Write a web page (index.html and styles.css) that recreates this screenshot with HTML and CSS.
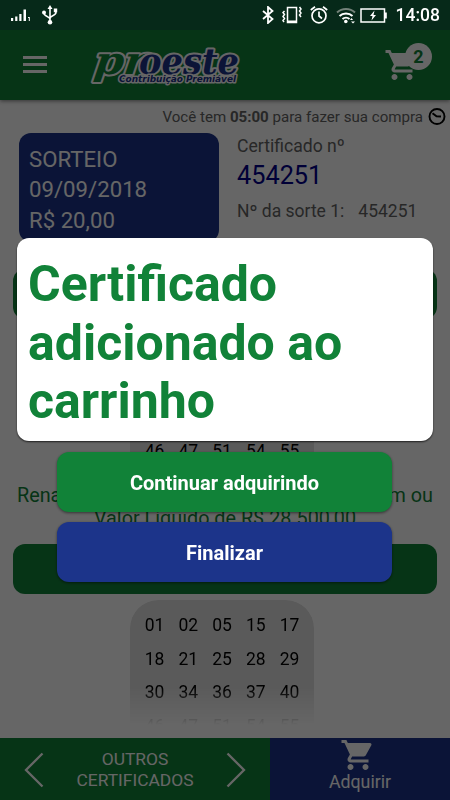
FILE: index.html
```html
<!DOCTYPE html>
<html lang="pt-BR">
<head>
    <meta charset="UTF-8">
    <meta name="viewport" content="width=device-width, initial-scale=1.0">
    <title>Proeste</title>
    <link rel="stylesheet" href="styles.css">
</head>
<body>
    <div class="app">
        <header class="header">
            <div class="menu"><span></span><span></span><span></span></div>
            <svg class="logo" width="156" height="46" viewBox="0 0 156 46">
                <text class="logo-pr" transform="translate(5 32) skewX(-7)" textLength="52" lengthAdjust="spacingAndGlyphs">pr</text>
                <text class="logo-oeste" x="51" y="32" textLength="100" lengthAdjust="spacingAndGlyphs">oeste</text>
                <text class="logo-sub" x="31" y="39.500" textLength="117" lengthAdjust="spacingAndGlyphs">Contribuição Premiável</text>
            </svg>
            <div class="cart">
                <svg width="36" height="36" viewBox="0 0 24 24" fill="#fff"><path d="M7 18c-1.1 0-1.99.9-1.99 2S5.9 22 7 22s2-.9 2-2-.9-2-2-2zM1 2v2h2l3.6 7.59-1.35 2.45c-.16.28-.25.61-.25.96 0 1.1.9 2 2 2h12v-2H7.42c-.14 0-.25-.11-.25-.25l.03-.12.9-1.63h7.45c.75 0 1.41-.41 1.75-1.03l3.58-6.49A1.003 1.003 0 0 0 20 4H5.21l-.94-2H1zm16 16c-1.1 0-1.99.9-1.99 2s.89 2 1.99 2 2-.9 2-2-.9-2-2-2z"/></svg>
                <span class="badge">2</span>
            </div>
        </header>

        <main class="content">
            <div class="timer">
                <span>Você tem <b>05:00</b> para fazer sua compra</span>
                <svg width="18" height="18" viewBox="0 0 18 18" fill="none" stroke="#000" stroke-width="1.900"><circle cx="9" cy="8.500" r="7.500"/><path d="M4.500 5.200L8.500 8.300l4.500.2"/></svg>
            </div>
            <div class="info">
                <div class="sorteio">
                    <div>SORTEIO</div>
                    <div>09/09/2018</div>
                    <div>R$ 20,00</div>
                </div>
                <div class="certificado">
                    <div class="cert-label">Certificado nº</div>
                    <div class="cert-number">454251</div>
                    <div class="cert-sorte"><span>Nº da sorte 1:</span><span>454251</span></div>
                </div>
            </div>

            <div class="bar"></div>
            <div class="numbers numbers-first">
                <span>01</span><span>02</span><span>05</span><span>15</span><span>17</span>
                <span>18</span><span>21</span><span>25</span><span>28</span><span>29</span>
                <span>30</span><span>34</span><span>36</span><span>37</span><span>40</span>
                <span>46</span><span>47</span><span>51</span><span>54</span><span>55</span>
            </div>
            <div class="prize">
                <div class="prize-name"><span>Renault Kwid</span><span>0km ou</span></div>
                <div class="prize-value">Valor Líquido de R$ 28.500,00</div>
            </div>

            <div class="bar"></div>
            <div class="numbers numbers-fade">
                <span>01</span><span>02</span><span>05</span><span>15</span><span>17</span>
                <span>18</span><span>21</span><span>25</span><span>28</span><span>29</span>
                <span>30</span><span>34</span><span>36</span><span>37</span><span>40</span>
                <span>46</span><span>47</span><span>51</span><span>54</span><span>55</span>
            </div>
        </main>

        <footer class="footer">
            <div class="outros">
                <svg width="20" height="36" viewBox="0 0 20 36" fill="none" stroke="#fff" stroke-width="2.3"><path d="M18.5 1.5L2 18l16.500 16.500"/></svg>
                <span>OUTROS<br>CERTIFICADOS</span>
                <svg width="20" height="36" viewBox="0 0 20 36" fill="none" stroke="#fff" stroke-width="2.3"><path d="M1.500 1.500L18 18 1.500 34.500"/></svg>
            </div>
            <div class="adquirir">
                <svg width="36" height="36" viewBox="0 0 24 24" fill="#fff"><path d="M7 18c-1.1 0-1.99.9-1.99 2S5.9 22 7 22s2-.9 2-2-.9-2-2-2zM1 2v2h2l3.6 7.59-1.35 2.45c-.16.28-.25.61-.25.96 0 1.1.9 2 2 2h12v-2H7.42c-.14 0-.25-.11-.25-.25l.03-.12.9-1.63h7.45c.75 0 1.41-.41 1.75-1.03l3.58-6.49A1.003 1.003 0 0 0 20 4H5.21l-.94-2H1zm16 16c-1.1 0-1.99.9-1.99 2s.89 2 1.99 2 2-.9 2-2-.9-2-2-2z"/></svg>
                <span>Adquirir</span>
            </div>
        </footer>
    </div>

    <div class="overlay">
        <div class="status">
            <svg width="20" height="14" viewBox="0 0 20 14" fill="#fff"><path d="M0 10h2.200v3H0zM4.200 8.500h2.200V13H4.200zM8.300 6h2.200v7H8.300zM12.500 1.500h2.500V13h-2.500zM17 9h1.800v4h-1v-3H17z"/></svg>
            <svg class="usb" width="16" height="20" viewBox="0 0 16 20" fill="none" stroke="#fff" stroke-width="1.6"><path d="M8 3v14M2 8c0 4 6 3 6 6.500M14 7c0 4.500-6 3-6 6.500"/><path d="M5.500 4L8 0l2.500 4zM11.800 3.500h3.400v3.800h-3.400z" fill="#fff" stroke="none"/><circle cx="2" cy="7.500" r="2" fill="#fff" stroke="none"/><circle cx="8" cy="17.300" r="2.300" fill="#fff" stroke="none"/></svg>
            <div class="status-right">
                <svg width="12" height="18" viewBox="0 0 12 18" fill="none" stroke="#fff" stroke-width="1.8"><path d="M1 5l9.500 8L6 17V1l4.500 4L1 13"/></svg>
                <svg width="20" height="18" viewBox="0 0 20 18" fill="none" stroke="#fff" stroke-width="1.500"><path d="M5.500 1.500h9v15h-9zM5.500 15.300h9"/><path d="M2.500 5L1 6.500l1.500 2L1 10.500l1.500 2L1 14.500l1 1.500M17.500 1L19 3l-1.500 2L19 7l-1.500 2 1.500 2"/></svg>
                <svg width="18" height="18" viewBox="0 0 18 18" fill="none" stroke="#fff" stroke-width="1.700"><circle cx="9" cy="9.800" r="7"/><path d="M9 5.500V10l3 2.500M.8 4L5 .8M17.200 4L13 .8"/></svg>
                <svg class="wifi" width="20" height="17" viewBox="0 0 20 17" fill="none" stroke="#fff" stroke-width="2"><path d="M1 5.500c5-4.700 13-4.700 18 0" stroke="#738279"/><path d="M3.500 9c3.500-3.500 9.500-3.500 13 0M6.500 12c2-1.800 5-1.800 7 0"/><circle cx="9.800" cy="14.500" r="1.800" fill="#fff" stroke="none"/><path d="M14 13l1.500-2 1.500 2zM15 14.500h4l-2 2z" fill="#fff" stroke="none"/></svg>
                <svg width="27" height="15" viewBox="0 0 27 15" fill="none" stroke="#fff" stroke-width="1.500"><path d="M1 1h23.500v13H1z"/><path d="M25 4.500h1.800v6H25zM14.500 2.500L10 8h2.500L11.500 12.500 16 7h-2.500z" fill="#fff" stroke="none"/></svg>
                <span class="clock">14:08</span>
            </div>
        </div>
        <div class="dialog">Certificado adicionado ao carrinho</div>
        <div class="btn btn-green">Continuar adquirindo</div>
        <div class="btn btn-blue">Finalizar</div>
    </div>
</body>
</html>
```
FILE: styles.css
```css
* {
    box-sizing: border-box;
}

body {
    margin: 0;
    background-color: #ffffff;
    font-family: Roboto, sans-serif;
    color: #636363;
}

.app {
    display: flex;
    flex-direction: column;
    height: 800px;
    overflow: hidden;
}

/* Cabecalho */
.header {
    display: flex;
    align-items: center;
    flex-shrink: 0;
    height: 100px;
    padding: 30px 17px 0 23px;
    background-color: #118238;
    box-shadow: 0 1px 4px rgba(0, 0, 0, 0.5);
}

.menu {
    display: flex;
    flex-direction: column;
    gap: 4px;
    width: 24px;
    margin-top: -1px;
}

.menu span {
    height: 3px;
    background-color: #ffffff;
}

.logo {
    margin-left: 41px;
    overflow: visible;
}

.logo text {
    font-style: italic;
    font-weight: bold;
    stroke: #ffffff;
    stroke-linejoin: round;
    paint-order: stroke;
}

.logo .logo-pr {
    font-family: "DejaVu Serif", serif;
    font-size: 38px;
    fill: #118238;
    stroke-width: 4;
}

.logo .logo-oeste {
    font-family: "DejaVu Serif", serif;
    font-size: 35px;
    fill: #1c348a;
    stroke-width: 4;
}

.logo .logo-sub {
    font-family: "DejaVu Sans", sans-serif;
    font-size: 9px;
    fill: #1c348a;
    stroke-width: 3;
}

.cart {
    position: relative;
    height: 36px;
    margin-left: auto;
    margin-right: 13px;
}

.cart .badge {
    position: absolute;
    top: -4px;
    left: 21px;
    width: 27px;
    height: 27px;
    border-radius: 50%;
    background-color: #ffffff;
    color: #118238;
    font-size: 18px;
    font-weight: bold;
    line-height: 28px;
    text-align: center;
}

/* Conteudo */
.content {
    flex: 1;
    min-height: 0;
    padding: 8px 13px 0;
    overflow: hidden;
}

.timer {
    display: flex;
    justify-content: flex-end;
    align-items: center;
    gap: 5px;
    height: 18px;
    margin-right: -9px;
    font-size: 15.1px;
    white-space: nowrap;
}

.info {
    display: flex;
    gap: 18px;
    height: 109px;
    margin: 7px 6px 0;
}

.sorteio {
    width: 200px;
    padding: 11px 10px;
    border-radius: 12px;
    background-color: #1c348a;
    color: #ffffff;
    font-size: 22.2px;
    line-height: 30.3px;
}

.certificado {
    flex: 1;
    white-space: nowrap;
}

.cert-label {
    font-size: 17.6px;
    line-height: 26px;
}

.cert-number {
    color: #00008b;
    font-size: 25.3px;
    line-height: 34px;
}

.cert-sorte {
    display: flex;
    gap: 14px;
    margin-top: 7px;
    font-size: 17.5px;
    line-height: 22px;
}

.bar {
    height: 50px;
    margin-top: 27px;
    border-radius: 12px;
    background-color: #118238;
}

.numbers {
    display: grid;
    grid-template-columns: repeat(5, 33.75px);
    grid-auto-rows: 33.7px;
    justify-content: center;
    align-items: center;
    width: 184px;
    margin: 6px 0 0 117px;
    padding-top: 8px;
    border-radius: 28px 28px 0 0;
    background-color: #e2e2e2;
    color: #000000;
    font-size: 17.5px;
    text-align: center;
}

.numbers-first {
    height: 148px;
}

.numbers-fade {
    height: 125px;
    overflow: hidden;
    -webkit-mask-image: linear-gradient(#000 88px, transparent 125px);
    mask-image: linear-gradient(#000 88px, transparent 125px);
}

.prize {
    margin-top: 11px;
    color: #118238;
    font-size: 19.8px;
    line-height: 23px;
    white-space: nowrap;
}

.prize-name {
    display: flex;
    justify-content: space-between;
    padding: 0 4px;
}

.prize-value {
    text-align: center;
}

.prize + .bar {
    margin-top: 14px;
}

/* Rodape */
.footer {
    display: flex;
    flex-shrink: 0;
    height: 62px;
    color: #ffffff;
    font-size: 17.4px;
}

.outros {
    display: flex;
    align-items: center;
    justify-content: space-between;
    width: 270px;
    padding: 1px 24px 0 24px;
    background-color: #118238;
    line-height: 20.5px;
    text-align: center;
}

.adquirir {
    display: flex;
    flex-direction: column;
    align-items: center;
    flex: 1;
    background-color: #1c348a;
    font-size: 17.8px;
}

.adquirir svg {
    margin: -1px 4px 0 0;
}

.adquirir span {
    line-height: 17px;
}

/* Mensagem sobre a pagina */
.overlay {
    position: fixed;
    top: 0;
    left: 0;
    width: 100%;
    height: 800px;
    background-color: rgba(0, 0, 0, 0.6);
}

.status {
    display: flex;
    align-items: center;
    height: 30px;
    padding: 0 10px 0 11px;
    background-color: #062919;
    color: #ffffff;
}

.usb {
    margin-left: 11px;
}

.status-right {
    display: flex;
    align-items: center;
    gap: 8px;
    margin-left: auto;
}

.wifi {
    margin-right: -4px;
}

.clock {
    margin-left: 1px;
    font-size: 17.5px;
    font-weight: 500;
}

.dialog {
    height: 203px;
    margin: 208px 17px 0;
    padding: 17px 80px 0 11px;
    border-radius: 12px;
    background-color: #ffffff;
    box-shadow: 0 1px 2px rgba(0, 0, 0, 0.7);
    color: #118238;
    font-size: 50px;
    font-weight: bold;
    line-height: 58.5px;
}

.btn {
    width: 335px;
    height: 60px;
    margin: 11px 0 0 57px;
    border-radius: 12px;
    box-shadow: 0 1px 3px rgba(0, 0, 0, 0.5);
    color: #ffffff;
    font-size: 20px;
    font-weight: bold;
    line-height: 62px;
    text-align: center;
}

.btn-green {
    background-color: #118238;
}

.btn-blue {
    margin-top: 10px;
    background-color: #1c348a;
}
```
